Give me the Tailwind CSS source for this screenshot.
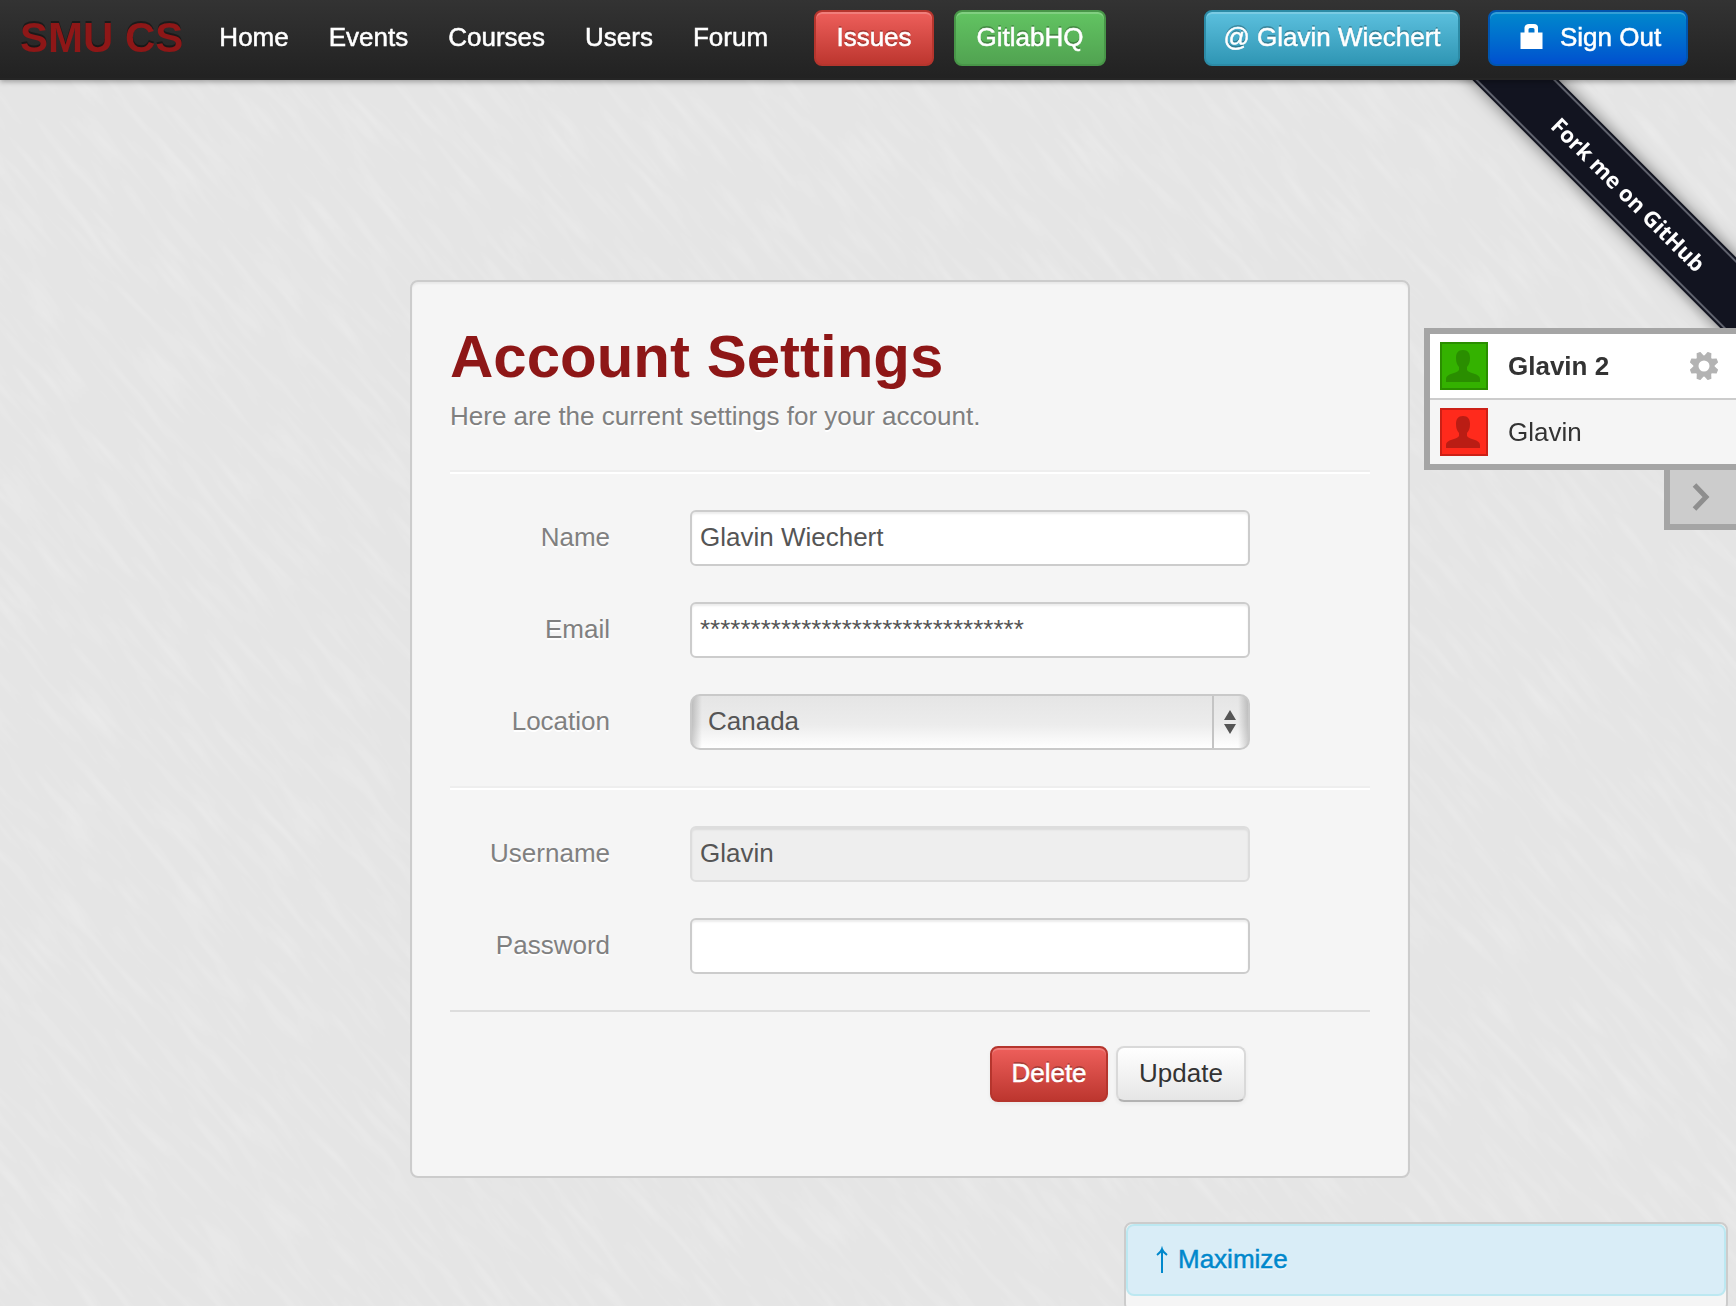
<!DOCTYPE html>
<html lang="en">
<head>
<meta charset="utf-8">
<title>Account Settings - SMU CS</title>
<script src="https://cdn.jsdelivr.net/npm/@tailwindcss/browser@4"></script>
</head>
<body class="relative min-h-screen overflow-x-hidden bg-[#e5e5e5] font-['Liberation_Sans',Arial,sans-serif] text-[26px] leading-10 text-[#333]">

<!-- brushed paper background -->
<div class="pointer-events-none fixed inset-0 -z-10 overflow-hidden" aria-hidden="true">
  <svg class="absolute top-1/2 left-1/2 size-[2400px] -translate-x-1/2 -translate-y-1/2 rotate-[50deg]">
    <filter id="brushed" x="0" y="0" width="100%" height="100%">
      <feTurbulence type="fractalNoise" baseFrequency="0.014 0.1" numOctaves="2" seed="4"/>
      <feColorMatrix values="0 0 0 0 1  0 0 0 0 1  0 0 0 0 1  1.4 0 0 0 -0.6"/>
    </filter>
    <rect width="100%" height="100%" filter="url(#brushed)" opacity="0.3"/>
  </svg>
</div>

<header class="relative z-20 flex h-20 items-start border-b-2 border-[#252525] bg-linear-to-b from-[#333] to-[#222] pt-2.5 pr-12 pl-5 text-white shadow-[0_2px_5px_rgba(0,0,0,0.3)]">
  <a href="#" class="text-[42px] leading-[56px] font-bold whitespace-nowrap text-[#8e1717] [text-shadow:0_-2px_0_rgba(0,0,0,0.4)]">SMU CS</a>
  <nav class="ml-9 flex gap-10 leading-[54px] [-webkit-text-stroke:0.5px]">
    <a href="#">Home</a>
    <a href="#">Events</a>
    <a href="#">Courses</a>
    <a href="#">Users</a>
    <a href="#">Forum</a>
  </nav>
  <div class="ml-auto flex gap-5 leading-[50px] whitespace-nowrap [-webkit-text-stroke:0.5px] [text-shadow:0_-2px_0_rgba(0,0,0,0.25)]">
    <a href="#" class="h-14 w-[120px] rounded-lg border-2 border-[#b5352d] bg-linear-to-b from-[#ee5f5b] to-[#bd362f] text-center shadow-[inset_0_2px_0_rgba(255,255,255,0.2)]">Issues</a>
    <a href="#" class="h-14 w-[152px] rounded-lg border-2 border-[#489648] bg-linear-to-b from-[#62c462] to-[#51a351] text-center shadow-[inset_0_2px_0_rgba(255,255,255,0.2)]">GitlabHQ</a>
  </div>
  <div class="ml-[98px] flex gap-7 leading-[50px] whitespace-nowrap [-webkit-text-stroke:0.5px] [text-shadow:0_-2px_0_rgba(0,0,0,0.25)]">
    <a href="#" class="h-14 w-[256px] rounded-lg border-2 border-[#2c8ba6] bg-linear-to-b from-[#5bc0de] to-[#2f96b4] text-center shadow-[inset_0_2px_0_rgba(255,255,255,0.2)]">@ Glavin Wiechert</a>
    <button type="button" class="flex h-14 w-[200px] gap-4 rounded-lg border-2 border-[#0055b0] bg-linear-to-b from-[#0088cc] to-[#0050cf] pl-[30px] shadow-[inset_0_2px_0_rgba(255,255,255,0.2)]">
      <svg class="mt-2.5 h-7 w-6" viewBox="0 0 24 28" fill="#fff" aria-hidden="true"><path d="M0.500 10.500H4.500V5.500Q5 2 9 2H14Q18 2 18 5.500V10.500H22.500V27H0.500ZM8.500 10.500H14.500V7.500Q14.500 6 13 6H10Q8.500 6 8.500 7.500Z" fill-rule="evenodd"/></svg>
      <span>Sign Out</span>
    </button>
  </div>
</header>

<!-- corner ribbon -->
<a href="#" class="absolute top-20 right-0 z-10 block h-[300px] w-[300px] overflow-hidden">
  <span class="absolute top-[86px] left-[-54px] flex h-[61px] w-[500px] rotate-45 items-center justify-center bg-[#121420] pr-2 shadow-[0_0_16px_rgba(0,0,0,0.5)]">
    <span class="absolute inset-x-0 inset-y-[2px] border-y-2 border-[#60636e]"></span>
    <span class="font-['Open_Sans',sans-serif] text-[22px] font-bold whitespace-nowrap text-white">Fork me on GitHub</span>
  </span>
</a>

<!-- account switcher -->
<aside class="absolute top-[328px] right-0 z-10 flex w-[312px] flex-col items-end">
  <ul class="w-full border-y-[6px] border-l-[6px] border-[#a5a5a5]">
    <li class="flex h-[66px] items-center border-b-2 border-[#ccc] bg-white pr-[18px] pl-2.5 font-bold">
      <svg class="size-12" viewBox="0 0 48 48" aria-hidden="true"><rect x="1" y="1" width="46" height="46" fill="#34b200" stroke="#2a8e00" stroke-width="2"/><path d="M23 8C18 8 16 11 16 16Q16 22 19 25V28C17 32 6 31 6 37V40H40V37C40 31 29 32 27 28V25Q30 22 30 16C30 11 28 8 23 8Z" fill="#2a8e00"/></svg>
      <span class="ml-5">Glavin 2</span>
      <button type="button" aria-label="Settings" class="ml-auto"><svg class="size-7" viewBox="-14 -14 28 28" aria-hidden="true"><g fill="#b3b3b3"><path id="cog" transform="rotate(22.500)" d="M-4 -9L-2 -14.500H2L4 -9V9L2 14.500H-2L-4 9Z"/><use href="#cog" transform="rotate(45)"/><use href="#cog" transform="rotate(90)"/><use href="#cog" transform="rotate(135)"/><circle r="10.500"/></g><circle r="5.500" fill="#fff"/></svg></button>
    </li>
    <li class="flex h-16 items-center bg-[#f5f5f5] pl-2.5">
      <svg class="size-12" viewBox="0 0 48 48" aria-hidden="true"><rect x="1" y="1" width="46" height="46" fill="#ff2a1c" stroke="#cc2016" stroke-width="2"/><path d="M23 8C18 8 16 11 16 16Q16 22 19 25V28C17 32 6 31 6 37V40H40V37C40 31 29 32 27 28V25Q30 22 30 16C30 11 28 8 23 8Z" fill="#ba1d14"/></svg>
      <span class="ml-5">Glavin</span>
    </li>
  </ul>
  <button type="button" aria-label="Hide accounts" class="h-[60px] w-[72px] border-b-[6px] border-l-[6px] border-[#a5a5a5] bg-[#ccc] pl-[22px]">
    <svg class="h-7 w-[18px]" viewBox="0 0 18 28" fill="none" stroke="#8e8e8e" stroke-width="5" aria-hidden="true"><path d="M2.500 2L14 14L2.500 26"/></svg>
  </button>
</aside>

<main class="pt-[200px] pb-32 pl-[84px]">
  <form class="mx-auto max-w-[1000px] rounded-lg border-2 border-[#ccc] bg-[#f5f5f5] px-[38px] pt-[38px] pb-[74px] shadow-[inset_0_2px_2px_rgba(0,0,0,0.05)]">
    <h1 class="text-[60px] leading-[74px] font-bold text-[#8e1717]">Account Settings</h1>
    <p class="leading-[44px] text-[#808080] [text-shadow:0_2px_0_#fff]">Here are the current settings for your account.</p>
    <hr class="mt-8 mb-9 h-1 border-t-2 border-b-2 border-t-[#eee] border-b-white">
    <div class="flex flex-col gap-9">
      <div class="flex items-center gap-20">
        <label for="name" class="w-40 pb-0.5 text-right text-[#808080] [text-shadow:0_2px_0_#fff]">Name</label>
        <input id="name" type="text" value="Glavin Wiechert" class="h-14 w-[560px] rounded-md border-2 border-[#ccc] bg-white px-2 pb-0.5 text-[#555] shadow-[inset_0_2px_2px_rgba(0,0,0,0.075)]">
      </div>
      <div class="flex items-center gap-20">
        <label for="email" class="w-40 pb-0.5 text-right text-[#808080] [text-shadow:0_2px_0_#fff]">Email</label>
        <input id="email" type="text" value="********************************" class="h-14 w-[560px] rounded-md border-2 border-[#ccc] bg-white px-2 pb-0.5 text-[#555] shadow-[inset_0_2px_2px_rgba(0,0,0,0.075)]">
      </div>
      <div class="flex items-center gap-20">
        <label for="location" class="w-40 pb-0.5 text-right text-[#808080] [text-shadow:0_2px_0_#fff]">Location</label>
        <div class="relative w-[560px]">
          <select id="location" class="block h-14 w-full appearance-none rounded-[10px] border-2 border-[#c9c9c9] bg-[linear-gradient(to_right,rgba(0,0,0,0.18),transparent_10px,transparent_calc(100%-10px),rgba(0,0,0,0.18)),linear-gradient(#e5e5e5,#ececec_55%,#fff)] px-4 pb-0.5 text-[#555]"><option>Canada</option></select>
          <span class="pointer-events-none absolute inset-y-0.5 right-0.5 flex w-9 items-center border-l-2 border-[#c4c4c4] pl-2.5">
            <svg class="h-6 w-3" viewBox="0 0 12 24" fill="#555" aria-hidden="true"><path d="M6 0L12 10H0ZM0 14H12L6 24Z"/></svg>
          </span>
        </div>
      </div>
    </div>
    <hr class="my-9 h-1 border-t-2 border-b-2 border-t-[#eee] border-b-white">
    <div class="flex flex-col gap-9">
      <div class="flex items-center gap-20">
        <label for="username" class="w-40 pb-0.5 text-right text-[#808080] [text-shadow:0_2px_0_#fff]">Username</label>
        <input id="username" type="text" value="Glavin" readonly class="h-14 w-[560px] rounded-md border-2 border-[#ddd] bg-[#eee] px-2 pb-0.5 text-[#555] shadow-[inset_0_2px_2px_rgba(0,0,0,0.075)]">
      </div>
      <div class="flex items-center gap-20">
        <label for="password" class="w-40 pb-0.5 text-right text-[#808080] [text-shadow:0_2px_0_#fff]">Password</label>
        <input id="password" type="password" class="h-14 w-[560px] rounded-md border-2 border-[#ccc] bg-white px-2 pb-0.5 text-[#555] shadow-[inset_0_2px_2px_rgba(0,0,0,0.075)]">
      </div>
    </div>
    <div class="mt-9 flex justify-end gap-2 border-t-2 border-[#ddd] pt-[34px] pr-[124px]">
      <button type="button" class="h-14 w-[118px] rounded-lg border-2 border-[#b5352d] bg-linear-to-b from-[#ee5f5b] to-[#bd362f] pb-0.5 text-white shadow-[inset_0_2px_0_rgba(255,255,255,0.2),0_2px_4px_rgba(0,0,0,0.05)] [-webkit-text-stroke:0.5px] [text-shadow:0_-2px_0_rgba(0,0,0,0.25)]">Delete</button>
      <button type="submit" class="h-14 w-[130px] rounded-lg border-2 border-[#d9d9d9] border-b-[#b3b3b3] bg-linear-to-b from-white to-[#e6e6e6] pb-0.5 shadow-[0_2px_4px_rgba(0,0,0,0.05)]">Update</button>
    </div>
  </form>
</main>

<!-- docked panel, its lower edge runs off the window -->
<section class="fixed right-2 -bottom-1.5 z-10 h-[90px] w-[604px] rounded-lg border-2 border-[#ccc] bg-[#f5f5f5]">
  <div class="flex h-[72px] items-center rounded-lg border-2 border-[#bce8f1] bg-[#d9edf7] px-[26px] pb-0.5 text-[#0088cc] [text-shadow:0_2px_0_rgba(255,255,255,0.5)]">
    <a href="#" class="flex items-center gap-2 [-webkit-text-stroke:0.5px]"><svg class="h-7 w-4" viewBox="0 0 16 28" fill="none" stroke="#0088cc" stroke-width="2" aria-hidden="true"><path d="M8 4V28M3 10Q7 7 8 4Q9 7 13 10"/></svg><span>Maximize</span></a>
  </div>
</section>
</body>
</html>
